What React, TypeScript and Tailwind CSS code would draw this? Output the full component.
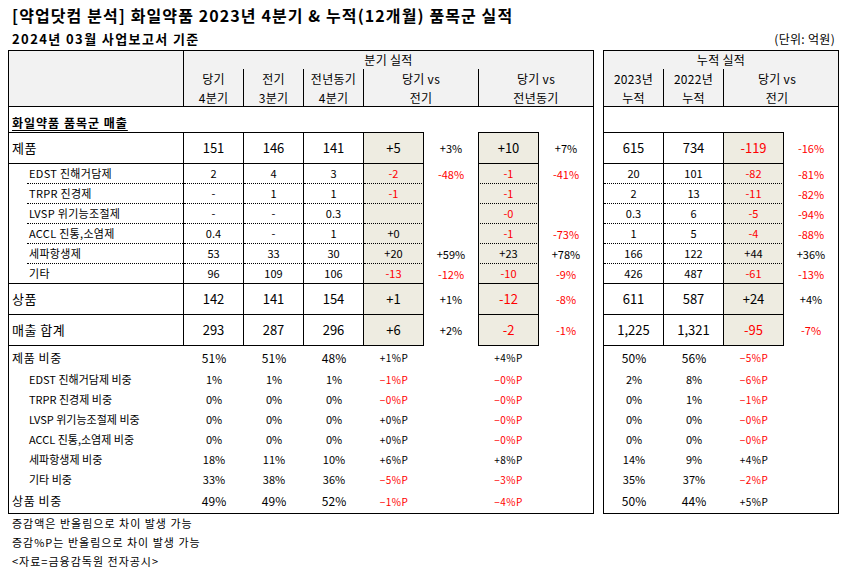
import React from "react"

type Row = {
  label: string
  kind: "top" | "main" | "sub" | "last"
  v: string[]
  d1: string
  p1: string
  d2: string
  p2: string
  r: string[]
  d3: string
  p3: string
}

const rows: Row[] = [
  { label: "제품", kind: "top", v: ["151", "146", "141"], d1: "+5", p1: "+3%", d2: "+10", p2: "+7%", r: ["615", "734"], d3: "-119", p3: "-16%" },
  { label: "EDST 진해거담제", kind: "sub", v: ["2", "4", "3"], d1: "-2", p1: "-48%", d2: "-1", p2: "-41%", r: ["20", "101"], d3: "-82", p3: "-81%" },
  { label: "TRPR 진경제", kind: "sub", v: ["-", "1", "1"], d1: "-1", p1: "", d2: "-1", p2: "", r: ["2", "13"], d3: "-11", p3: "-82%" },
  { label: "LVSP 위기능조절제", kind: "sub", v: ["-", "-", "0.3"], d1: "", p1: "", d2: "-0", p2: "", r: ["0.3", "6"], d3: "-5", p3: "-94%" },
  { label: "ACCL 진통,소염제", kind: "sub", v: ["0.4", "-", "1"], d1: "+0", p1: "", d2: "-1", p2: "-73%", r: ["1", "5"], d3: "-4", p3: "-88%" },
  { label: "세파항생제", kind: "sub", v: ["53", "33", "30"], d1: "+20", p1: "+59%", d2: "+23", p2: "+78%", r: ["166", "122"], d3: "+44", p3: "+36%" },
  { label: "기타", kind: "last", v: ["96", "109", "106"], d1: "-13", p1: "-12%", d2: "-10", p2: "-9%", r: ["426", "487"], d3: "-61", p3: "-13%" },
  { label: "상품", kind: "main", v: ["142", "141", "154"], d1: "+1", p1: "+1%", d2: "-12", p2: "-8%", r: ["611", "587"], d3: "+24", p3: "+4%" },
  { label: "매출 합계", kind: "main", v: ["293", "287", "296"], d1: "+6", p1: "+2%", d2: "-2", p2: "-1%", r: ["1,225", "1,321"], d3: "-95", p3: "-7%" },
]

type Ratio = { label: string; sub: boolean; v: string[]; a: string; b: string; r: string[]; c: string; h: string }

const ratios: Ratio[] = [
  { label: "제품 비중", sub: false, v: ["51%", "51%", "48%"], a: "+1%P", b: "+4%P", r: ["50%", "56%"], c: "−5%P", h: "h-[23px]" },
  { label: "EDST 진해거담제 비중", sub: true, v: ["1%", "1%", "1%"], a: "−1%P", b: "−0%P", r: ["2%", "8%"], c: "−6%P", h: "h-[20px]" },
  { label: "TRPR 진경제 비중", sub: true, v: ["0%", "0%", "0%"], a: "−0%P", b: "−0%P", r: ["0%", "1%"], c: "−1%P", h: "h-[20px]" },
  { label: "LVSP 위기능조절제 비중", sub: true, v: ["0%", "0%", "0%"], a: "+0%P", b: "−0%P", r: ["0%", "0%"], c: "−0%P", h: "h-[20px]" },
  { label: "ACCL 진통,소염제 비중", sub: true, v: ["0%", "0%", "0%"], a: "+0%P", b: "−0%P", r: ["0%", "0%"], c: "−0%P", h: "h-[20px]" },
  { label: "세파항생제 비중", sub: true, v: ["18%", "11%", "10%"], a: "+6%P", b: "+8%P", r: ["14%", "9%"], c: "+4%P", h: "h-[20px]" },
  { label: "기타 비중", sub: true, v: ["33%", "38%", "36%"], a: "−5%P", b: "−3%P", r: ["35%", "37%"], c: "−2%P", h: "h-[20px]" },
  { label: "상품 비중", sub: false, v: ["49%", "49%", "52%"], a: "−1%P", b: "−4%P", r: ["50%", "44%"], c: "+5%P", h: "h-[24px]" },
]

const neg = (s: string) => /^[-−]./.test(s)
const tone = (s: string) => (neg(s) ? "text-[#ff0000]" : "text-black")

const SHADE = "bg-[#eeece1]"

function rowHeight(k: Row["kind"]) {
  if (k === "top") return "h-[32px]"
  if (k === "main") return "h-[31px]"
  return "h-[20px]"
}

function lineClass(k: Row["kind"]) {
  if (k === "top") return "border-t border-b border-black"
  if (k === "sub") return "border-b border-black [border-bottom-style:dotted]"
  return "border-b border-black"
}

const LeftRow = ({ row }: { row: Row }) => {
  const big = row.kind === "top" || row.kind === "main"
  const num = big ? "text-[13px]" : "text-[11px]"
  const line = lineClass(row.kind)
  return (
    <div className={`flex ${rowHeight(row.kind)}`}>
      {big ? (
        <div className={`w-[175px] border-r border-black ${line} flex items-center pl-[3px] text-[13px] tracking-[0.5px]`}>{row.label}</div>
      ) : row.kind === "last" ? (
        <div className="w-[175px] border-r border-b border-black flex items-center pl-[20px] text-[11px] tracking-[0.3px]">{row.label}</div>
      ) : (
        <div className="w-[175px] border-r border-black">
          <div className="ml-[18px] h-full pl-[2px] flex items-center border-b border-black [border-bottom-style:dotted] text-[11px] tracking-[0.3px]">{row.label}</div>
        </div>
      )}
      {row.v.map((x, i) => (
        <div key={i} className={`w-[60px] border-r border-black ${line} flex items-center justify-center ${num}`}>{x}</div>
      ))}
      <div className={`w-[60px] border-r border-black ${line} ${SHADE} flex items-center justify-center ${num} ${tone(row.d1)}`}>{row.d1}</div>
      <div className={`w-[54px] flex items-center justify-center text-[11px] ${tone(row.p1)}`}>{row.p1}</div>
      <div className={`w-[61px] border-l border-r border-black ${line} ${SHADE} flex items-center justify-center ${num} ${tone(row.d2)}`}>{row.d2}</div>
      <div className={`w-[54px] flex items-center justify-center text-[11px] ${tone(row.p2)}`}>{row.p2}</div>
    </div>
  )
}

const RightRow = ({ row }: { row: Row }) => {
  const big = row.kind === "top" || row.kind === "main"
  const num = big ? "text-[13px]" : "text-[11px]"
  const line = lineClass(row.kind)
  return (
    <div className={`flex ${rowHeight(row.kind)}`}>
      {row.r.map((x, i) => (
        <div key={i} className={`w-[60px] border-r border-black ${line} flex items-center justify-center ${num}`}>{x}</div>
      ))}
      <div className={`w-[60px] border-r border-black ${line} ${SHADE} flex items-center justify-center ${num} ${tone(row.d3)}`}>{row.d3}</div>
      <div className={`w-[54px] flex items-center justify-center text-[11px] ${tone(row.p3)}`}>{row.p3}</div>
    </div>
  )
}

const Two = ({ a, b }: { a: string; b: string }) => (
  <div className="flex flex-col items-center leading-[19px] text-[12px] tracking-[0.3px]">
    <span>{a}</span>
    <span>{b}</span>
  </div>
)

const P = ({ s }: { s: string }) => (
  <span className={`text-[10px] tracking-[0.5px] ${tone(s)}`}>{s}</span>
)

export default function App() {
  return (
    <div className="w-[851px] h-[574px] bg-white text-black" style={{ fontFamily: '"Noto Sans CJK KR", "Noto Sans", sans-serif' }}>
      <div className="h-[29px] pt-[5px] pl-[12px] text-[16px] font-bold leading-[20px] tracking-[1.1px]">
        [약업닷컴 분석] 화일약품 2023년 4분기 &amp; 누적(12개월) 품목군 실적
      </div>
      <div className="h-[21px] pl-[12px] pr-[16px] flex justify-between leading-[20px]">
        <span className="text-[13px] font-bold tracking-[1.4px]">2024년 03월 사업보고서 기준</span>
        <span className="text-[12px] tracking-[0.3px]">(단위: 억원)</span>
      </div>

      <div className="flex gap-[9px] pl-[8px]">
        {/* 분기 실적 */}
        <div className="w-[586px] h-[464px] border border-black">
          <div className="flex h-[56px] border-b border-black bg-[#f2f2f2]">
            <div className="w-[175px] border-r border-black" />
            <div className="w-[409px] flex flex-col">
              <div className="h-[18px] flex items-center justify-center text-[12px] tracking-[0.3px]">분기 실적</div>
              <div className="flex h-[37px]">
                <div className="w-[60px] border-r border-black flex items-center justify-center"><Two a="당기" b="4분기" /></div>
                <div className="w-[60px] border-r border-black flex items-center justify-center"><Two a="전기" b="3분기" /></div>
                <div className="w-[60px] border-r border-black flex items-center justify-center"><Two a="전년동기" b="4분기" /></div>
                <div className="w-[115px] border-r border-black flex items-center justify-center"><Two a="당기 vs" b="전기" /></div>
                <div className="w-[114px] flex items-center justify-center"><Two a="당기 vs" b="전년동기" /></div>
              </div>
            </div>
          </div>
          <div className="h-[25px] flex items-end pl-[3px] pb-[1px]">
            <span className="text-[12px] font-bold underline underline-offset-[2px] leading-[16px] tracking-[1px]">화일약품 품목군 매출</span>
          </div>
          {rows.map((r) => (
            <LeftRow key={r.label} row={r} />
          ))}
          {ratios.map((r) => (
            <div key={r.label} className={`flex ${r.h}`}>
              <div className={`w-[175px] flex items-center ${r.sub ? "pl-[20px] text-[11px]" : "pl-[3px] text-[12px] tracking-[0.6px]"}`}>{r.label}</div>
              {r.v.map((x, i) => (
                <div key={i} className={`w-[60px] flex items-center justify-center ${r.sub ? "text-[11px]" : "text-[12px]"}`}>{x}</div>
              ))}
              <div className="w-[60px] flex items-center justify-center"><P s={r.a} /></div>
              <div className="w-[54px]" />
              <div className="w-[61px] flex items-center justify-center"><P s={r.b} /></div>
              <div className="w-[54px]" />
            </div>
          ))}
        </div>

        {/* 누적 실적 */}
        <div className="w-[236px] h-[464px] border border-black">
          <div className="h-[56px] border-b border-black bg-[#f2f2f2] flex flex-col">
            <div className="h-[18px] flex items-center justify-center text-[12px] tracking-[0.3px]">누적 실적</div>
            <div className="flex h-[37px]">
              <div className="w-[60px] border-r border-black flex items-center justify-center"><Two a="2023년" b="누적" /></div>
              <div className="w-[60px] border-r border-black flex items-center justify-center"><Two a="2022년" b="누적" /></div>
              <div className="w-[114px] flex items-center justify-center pr-[8px]"><Two a="당기 vs" b="전기" /></div>
            </div>
          </div>
          <div className="h-[25px]" />
          {rows.map((r) => (
            <RightRow key={r.label} row={r} />
          ))}
          {ratios.map((r) => (
            <div key={r.label} className={`flex ${r.h}`}>
              {r.r.map((x, i) => (
                <div key={i} className={`w-[60px] flex items-center justify-center ${r.sub ? "text-[11px]" : "text-[12px]"}`}>{x}</div>
              ))}
              <div className="w-[60px] flex items-center justify-center"><P s={r.c} /></div>
              <div className="w-[54px]" />
            </div>
          ))}
        </div>
      </div>

      <div className="pl-[12px] text-[11px] leading-[19px] tracking-[1px]">
        <div>증감액은 반올림으로 차이 발생 가능</div>
        <div>증감%P는 반올림으로 차이 발생 가능</div>
        <div>&lt;자료=금융감독원 전자공시&gt;</div>
      </div>
    </div>
  )
}
